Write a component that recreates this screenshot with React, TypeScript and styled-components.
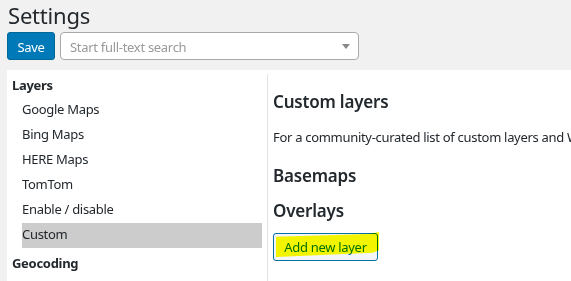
import React from "react";
import styled, { createGlobalStyle } from "styled-components";

const GlobalStyle = createGlobalStyle`
  html, body {
    margin: 0;
    padding: 0;
    background: #f1f1f1;
    font-family: "Noto Sans", "Open Sans", sans-serif;
    font-size: 13px;
    letter-spacing: -0.3px;
    color: #23282d;
    overflow: hidden;
  }
`;

const Page = styled.div`
  padding-left: 7px;
  width: 600px;
`;

const Title = styled.h1`
  margin: 0 0 0 1px;
  font-size: 22px;
  font-weight: 400;
  line-height: 31px;
  letter-spacing: -0.2px;
  color: #23282d;
`;

const Toolbar = styled.div`
  display: flex;
  gap: 5px;
  margin-top: 1px;
`;

const SaveButton = styled.button`
  height: 28px;
  width: 48px;
  padding: 1px 0 0;
  border: 1px solid #006799;
  border-radius: 3px;
  background: #0079b9;
  color: #fff;
  font-family: inherit;
  font-size: 13px;
  letter-spacing: inherit;
`;

const Search = styled.div`
  box-sizing: border-box;
  width: 299px;
  height: 28px;
  display: flex;
  align-items: center;
  justify-content: space-between;
  padding: 2px 8px 0 9px;
  background: #fff;
  border: 1px solid #aaa;
  border-radius: 4px;
  color: #999;
`;

const Caret = styled.span`
  width: 0;
  height: 0;
  border-left: 4px solid transparent;
  border-right: 4px solid transparent;
  border-top: 5px solid #888;
  margin-top: -1px;
`;

const Panel = styled.div`
  display: flex;
  margin-top: 10px;
  background: #fff;
  height: 220px;
`;

const Nav = styled.nav`
  box-sizing: border-box;
  width: 261px;
  margin-top: 4px;
  padding: 0 5px;
  border-right: 1px solid #e2e2e2;
`;

const NavHeading = styled.div<{ $gap?: number }>`
  font-weight: 700;
  line-height: 22px;
  padding-bottom: 2px;
  margin-top: ${(p) => p.$gap ?? 0}px;
`;

const NavItem = styled.div<{ $active?: boolean }>`
  margin-left: 10px;
  line-height: 23px;
  padding-bottom: 2px;
  background: ${(p) => (p.$active ? "#cccccc" : "transparent")};
`;

const Content = styled.div`
  flex: 1;
  padding: 0 5px;
  white-space: nowrap;
  overflow: hidden;
`;

const SectionTitle = styled.h2<{ $top: number }>`
  margin: ${(p) => p.$top}px 0 0;
  font-size: 17px;
  font-weight: 600;
  line-height: 22px;
  letter-spacing: -0.2px;
`;

const Text = styled.p`
  margin: 15px 0 0;
  line-height: 18px;
`;

const AddButton = styled.button`
  position: relative;
  margin-top: 11px;
  width: 105px;
  height: 28px;
  padding: 0 0 1px;
  border: 1px solid #0071a1;
  border-radius: 3px;
  background: #f3f5f6;
  color: #0071a1;
  font-family: inherit;
  font-size: 13px;
  letter-spacing: inherit;
`;

const Marker = styled.span`
  position: absolute;
  left: 2px;
  top: -2px;
  width: 103px;
  height: 26px;
  background: #ffff00;
  mix-blend-mode: multiply;
  clip-path: polygon(0 18%, 90% 8%, 100% 0, 100% 70%, 94% 80%, 0 96%);
`;

export default function App() {
  const layers = ["Google Maps", "Bing Maps", "HERE Maps", "TomTom", "Enable / disable", "Custom"];
  return (
    <Page>
      <GlobalStyle />
      <Title>Settings</Title>
      <Toolbar>
        <SaveButton>Save</SaveButton>
        <Search>
          Start full-text search
          <Caret />
        </Search>
      </Toolbar>
      <Panel>
        <Nav>
          <NavHeading>Layers</NavHeading>
          {layers.map((l) => (
            <NavItem key={l} $active={l === "Custom"}>
              {l}
            </NavItem>
          ))}
          <NavHeading $gap={4}>Geocoding</NavHeading>
        </Nav>
        <Content>
          <SectionTitle $top={21}>Custom layers</SectionTitle>
          <Text>For a community-curated list of custom layers and WMS services, see the wiki.</Text>
          <SectionTitle $top={19}>Basemaps</SectionTitle>
          <SectionTitle $top={13}>Overlays</SectionTitle>
          <AddButton>
            Add new layer
            <Marker />
          </AddButton>
        </Content>
      </Panel>
    </Page>
  );
}
